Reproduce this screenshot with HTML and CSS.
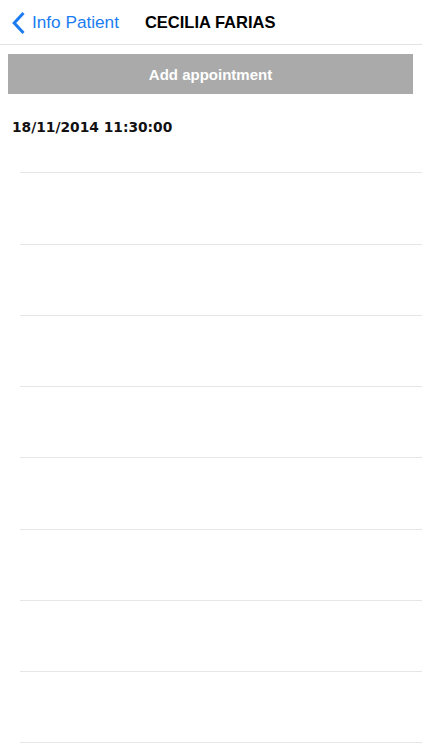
FILE: index.html
```html
<!DOCTYPE html>
<html lang="en">
  <head>
    <meta charset="UTF-8" />
    <meta name="viewport" content="width=device-width, initial-scale=1.0" />
    <title>Appointments</title>
    <link rel="stylesheet" href="styles.css">
  </head>
  <body>
    <main>
      <div class="navbar">
        <a class="back" href="#">
          <svg class="chevron" width="15" height="24" viewBox="0 0 15 24">
            <path d="M12.5 2 L3.2 12 L12.5 22" fill="none" stroke="#1a7cf0" stroke-width="3" />
          </svg>
          <span>Info Patient</span>
        </a>
        <div class="title">CECILIA FARIAS</div>
      </div>
      <div class="actions">
        <button class="btn-add">Add appointment</button>
      </div>
      <div class="list">
        <div class="row">
          <div class="date">18/11/2014 11:30:00</div>
        </div>
        <div class="row"></div>
        <div class="row"></div>
        <div class="row"></div>
        <div class="row"></div>
        <div class="row"></div>
        <div class="row"></div>
        <div class="row"></div>
        <div class="row"></div>
      </div>
    </main>
  </body>
</html>
```

FILE: styles.css
```css
body {
  margin: 0;
  background: #fff;
  font-family: "Liberation Sans", Arial, sans-serif;
  overflow: hidden;
}
main {
  width: 422px;
}
.navbar {
  display: flex;
  align-items: center;
  height: 45px;
  padding-top: 1px;
  border-bottom: 1px solid #e3e3e3;
  box-sizing: border-box;
}
.back {
  display: flex;
  align-items: center;
  margin-left: 11px;
  color: #1a7cf0;
  text-decoration: none;
  font-size: 17.2px;
}
.chevron {
  margin-right: 6px;
}
.title {
  margin-left: 26px;
  font-size: 16.5px;
  font-weight: bold;
  color: #000;
}
.actions {
  padding: 9px 9px 0 8px;
}
.btn-add {
  display: block;
  width: 100%;
  height: 40px;
  border: none;
  background: #aaaaaa;
  color: #fff;
  font-family: "Liberation Sans", Arial, sans-serif;
  font-size: 15px;
  font-weight: bold;
}
.list {
  margin-top: 8px;
}
.row {
  height: 71.25px;
  margin-left: 20px;
  border-bottom: 1px solid #e6e6e6;
  box-sizing: border-box;
}
.date {
  margin-left: -8px;
  padding-top: 17px;
  font-family: "DejaVu Sans", Verdana, sans-serif;
  font-size: 13.8px;
  font-weight: bold;
  color: #111;
}
```
